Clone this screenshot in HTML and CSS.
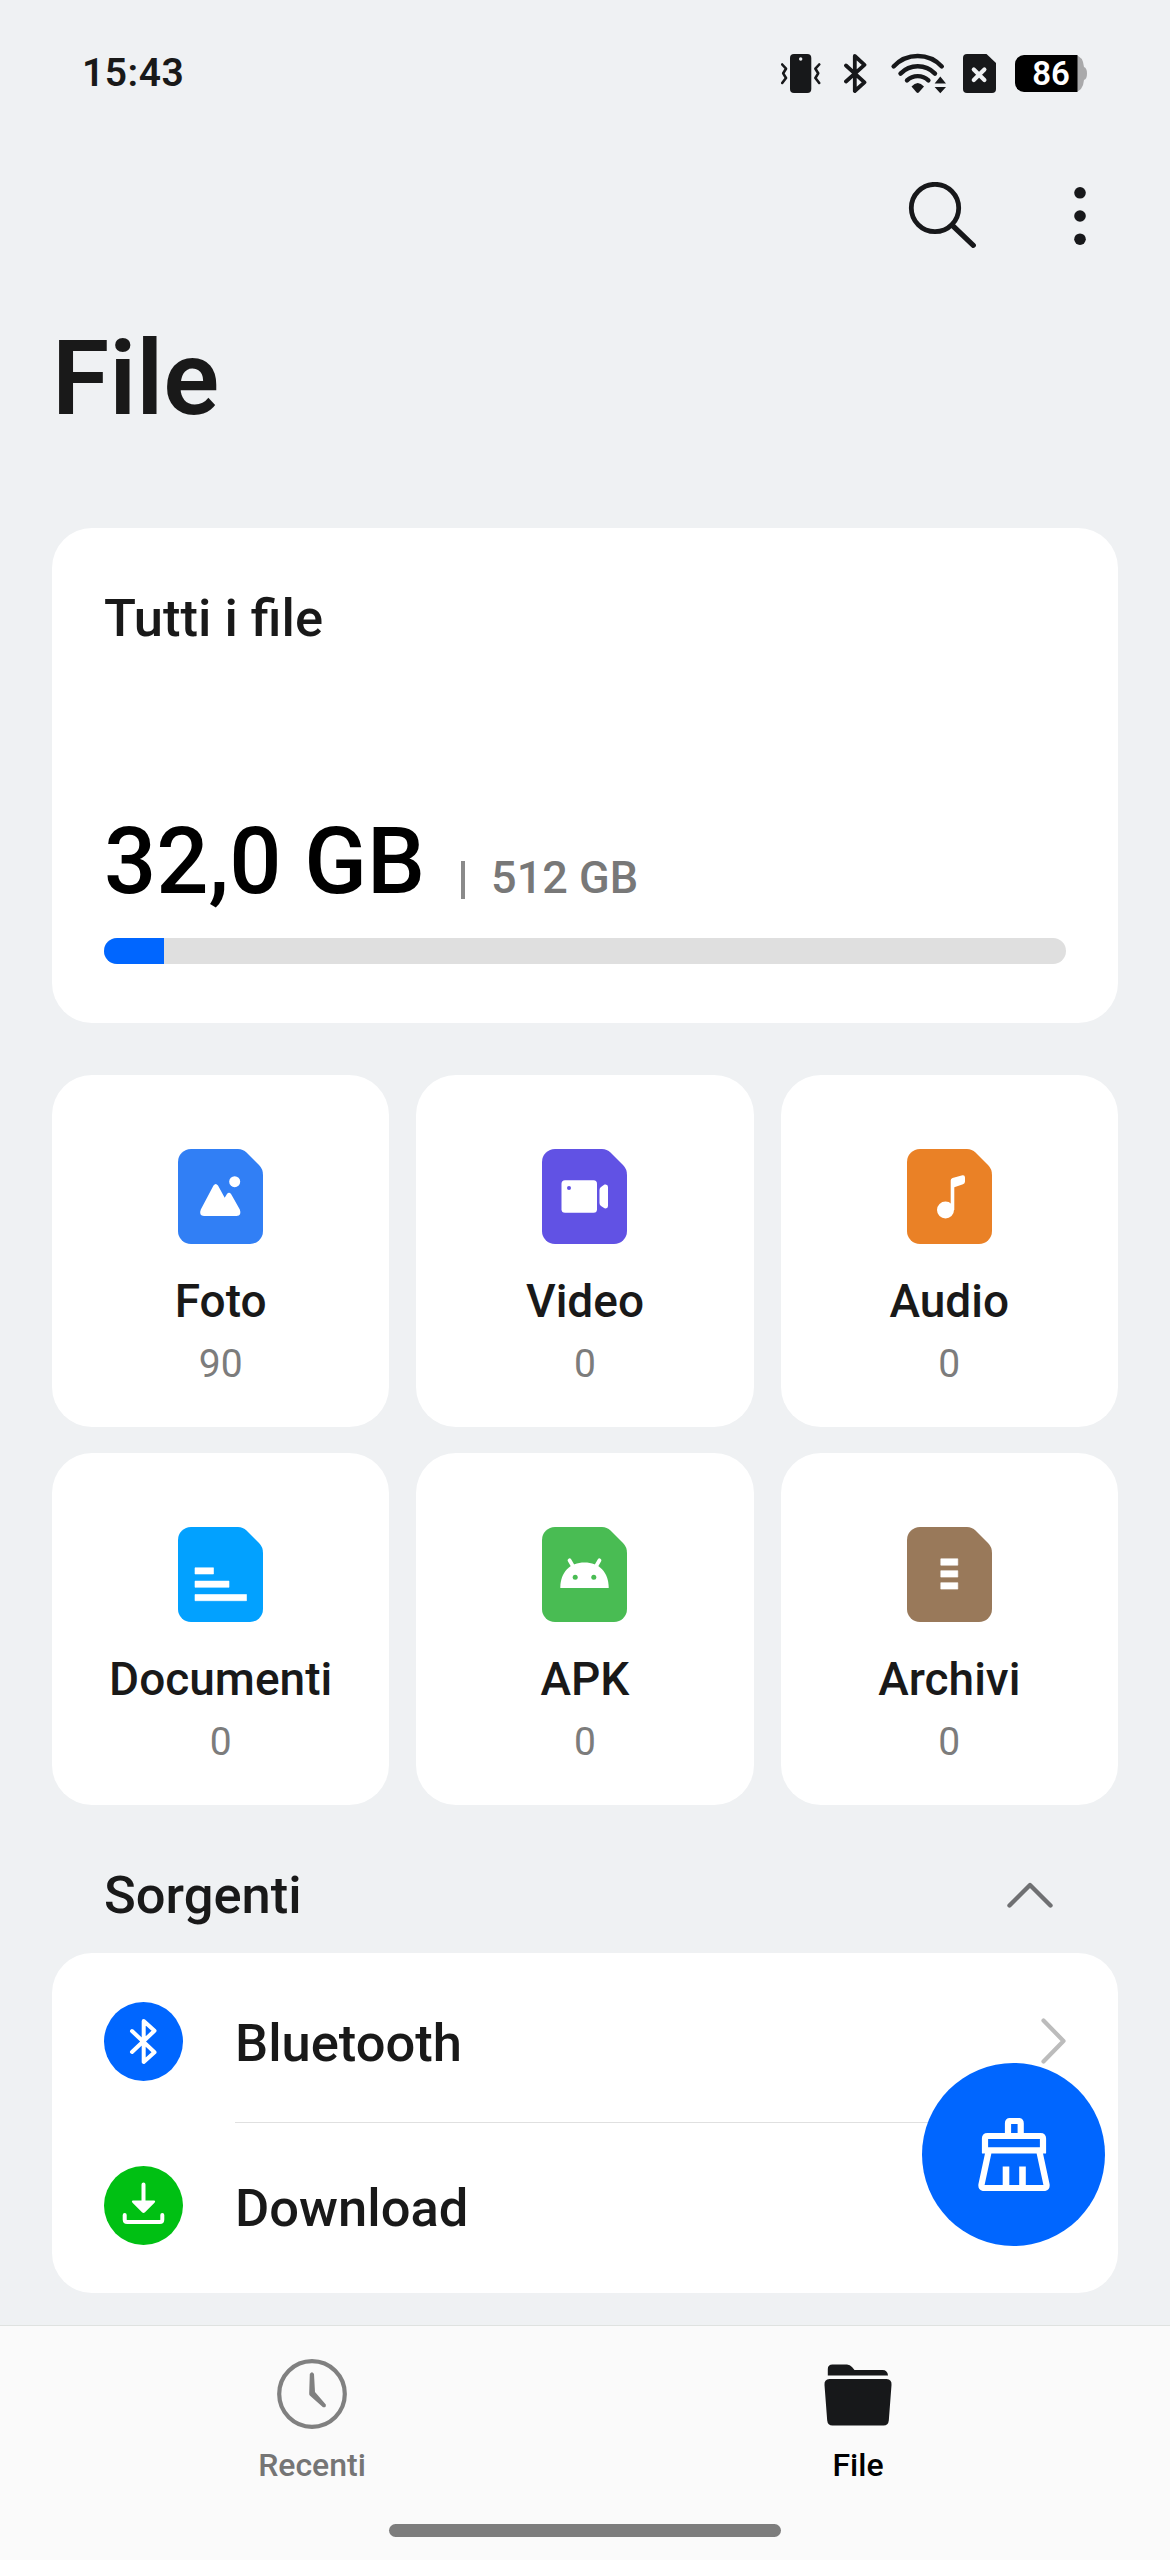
FILE: index.html
```html
<!DOCTYPE html>
<html lang="it">
<head>
    <meta charset="UTF-8">
    <meta name="viewport" content="width=device-width, initial-scale=1.0">
    <title>File</title>
    <link rel="stylesheet" href="styles.css">
</head>
<body>
    <div class="phone">
        <header class="status-bar">
            <span class="time">15:43</span>
            <div class="status-icons">
                <svg width="44" height="39" viewBox="0 0 44 39">
                    <rect x="9" width="21.3" height="39" rx="4" fill="#17181a"/>
                    <circle cx="19.7" cy="5" r="1.7" fill="#eff1f3"/>
                    <path d="M1.2 10.5L5 14.7 2.2 19.3 5 24 1.2 29M38.2 10.5L34.4 14.7 37.2 19.3 34.4 24 38.2 29" fill="none" stroke="#17181a" stroke-width="2.6" stroke-linejoin="round" stroke-linecap="round"/>
                </svg>
                <svg width="28" height="39" viewBox="0 0 28 39">
                    <path d="M2 11.5L20.5 28.3 10.8 37V2L20.5 10.8 2 27.5" fill="none" stroke="#17181a" stroke-width="3.8" stroke-linejoin="round" stroke-linecap="round"/>
                </svg>
                <svg class="wifi" width="53" height="39" viewBox="0 0 53 39">
                    <path d="M2.6 12.4A33 33 0 0 1 50.8 12.4M9.5 19.6A24 24 0 0 1 44 19.6M16 26.4A15.5 15.5 0 0 1 37.4 26.4" fill="none" stroke="#17181a" stroke-width="4.4" stroke-linecap="round"/>
                    <path d="M20.5 32.5Q26.7 25.5 33 32.5L28 38.3Q26.7 39.6 25.4 38.3Z" fill="#17181a"/>
                    <path d="M49.3 22.5L55 29.5H43.6ZM49.3 39.2L55 33H43.6Z" fill="#17181a"/>
                </svg>
                <svg width="33" height="39" viewBox="0 0 33 39">
                    <path d="M4 0H23.5L33 9V35a4 4 0 0 1-4 4H4a4 4 0 0 1-4-4V4a4 4 0 0 1 4-4Z" fill="#17181a"/>
                    <path d="M10.8 15.4L21.4 26M21.4 15.4L10.8 26" stroke="#eff1f3" stroke-width="4.2" stroke-linecap="round"/>
                </svg>
                <div class="battery">
                    <svg width="72" height="37" viewBox="0 0 72 37">
                        <path d="M60 0Q68 1 69 12 72 13 72 18.5 72 24 69 25 68 36 60 37Z" fill="#a9a9aa"/>
                        <path d="M9 0H62.5V37H9A9 9 0 0 1 0 28V9A9 9 0 0 1 9 0Z" fill="#000"/>
                    </svg>
                    <span class="battery-level">86</span>
                </div>
            </div>
        </header>

        <div class="toolbar">
            <svg width="68" height="68" viewBox="0 0 68 68">
                <circle cx="27" cy="26" r="23.7" fill="none" stroke="#17181a" stroke-width="4.8"/>
                <path d="M45 44L65.3 63.3" stroke="#17181a" stroke-width="5.2" stroke-linecap="round"/>
            </svg>
            <svg width="12" height="60" viewBox="0 0 12 60">
                <circle cx="6" cy="6.8" r="5.8" fill="#17181a"/>
                <circle cx="6" cy="30" r="5.8" fill="#17181a"/>
                <circle cx="6" cy="53.2" r="5.8" fill="#17181a"/>
            </svg>
        </div>

        <h1>File</h1>

        <main>
            <section class="card storage">
                <h2>Tutti i file</h2>
                <div class="amount">
                    <span class="used">32,0 GB</span>
                    <span class="separator"></span>
                    <span class="total">512 GB</span>
                </div>
                <div class="bar"><div class="bar-fill" style="width: 6.25%"></div></div>
            </section>

            <section class="categories">
                <div class="card category">
                    <svg width="85" height="95" viewBox="0 0 85 95">
                        <path class="photo" d="M13 0H60Q65 0 68.5 3.5L81 16Q85 20 85 26V82a13 13 0 0 1-13 13H13A13 13 0 0 1 0 82V13A13 13 0 0 1 13 0Z"/>
                        <path d="M35.5 36.5Q37.7 33.5 40 36.5L46.7 48.7 48.8 45.2Q51 42.3 53.2 45.2L61.8 60.5Q64 66.5 58.5 67H26Q20.5 66.5 22.8 60.5Z" fill="#fff"/>
                        <circle cx="56.7" cy="32.7" r="5.5" fill="#fff"/>
                    </svg>
                    <span class="name">Foto</span>
                    <span class="count">90</span>
                </div>
                <div class="card category">
                    <svg width="85" height="95" viewBox="0 0 85 95">
                        <path class="video" d="M13 0H60Q65 0 68.5 3.5L81 16Q85 20 85 26V82a13 13 0 0 1-13 13H13A13 13 0 0 1 0 82V13A13 13 0 0 1 13 0Z"/>
                        <rect x="19.5" y="31.3" width="35.5" height="32.5" rx="3.5" fill="#fff"/>
                        <circle class="video" cx="27" cy="39" r="2"/>
                        <path d="M57.5 41Q57.5 39 59 38L62.5 35.6Q66 34.8 66 38V57Q66 60 62.5 59.3L59 57Q57.5 56 57.5 54Z" fill="#fff"/>
                    </svg>
                    <span class="name">Video</span>
                    <span class="count">0</span>
                </div>
                <div class="card category">
                    <svg width="85" height="95" viewBox="0 0 85 95">
                        <path class="audio" d="M13 0H60Q65 0 68.5 3.5L81 16Q85 20 85 26V82a13 13 0 0 1-13 13H13A13 13 0 0 1 0 82V13A13 13 0 0 1 13 0Z"/>
                        <circle cx="38.5" cy="61" r="8.5" fill="#fff"/>
                        <path d="M43.7 61V31.5Q43.7 29.5 45.5 29L55.5 26.3Q58 26 58 28.5V32.5Q58 34.5 56 35.3L47.3 38.3V61Z" fill="#fff"/>
                    </svg>
                    <span class="name">Audio</span>
                    <span class="count">0</span>
                </div>
                <div class="card category">
                    <svg width="85" height="95" viewBox="0 0 85 95">
                        <path class="docs" d="M13 0H60Q65 0 68.5 3.5L81 16Q85 20 85 26V82a13 13 0 0 1-13 13H13A13 13 0 0 1 0 82V13A13 13 0 0 1 13 0Z"/>
                        <path d="M17 40.8h18.5v6.2H17ZM17 54.1h34v6.2H17ZM17 67.5h51.5v6.2H17Z" fill="#fff" stroke="#fff" stroke-width=".6" stroke-linejoin="round"/>
                    </svg>
                    <span class="name">Documenti</span>
                    <span class="count">0</span>
                </div>
                <div class="card category">
                    <svg width="85" height="95" viewBox="0 0 85 95">
                        <path class="apk" d="M13 0H60Q65 0 68.5 3.5L81 16Q85 20 85 26V82a13 13 0 0 1-13 13H13A13 13 0 0 1 0 82V13A13 13 0 0 1 13 0Z"/>
                        <path d="M18.3 61C18.3 45 28 35.5 42.500 35.5S66.7 45 66.7 61Z" fill="#fff"/>
                        <path d="M27.5 33.3L32 41M57.5 33.3L53 41" stroke="#fff" stroke-width="3.8" stroke-linecap="round"/>
                        <circle class="apk" cx="33.2" cy="50.3" r="2.5"/>
                        <circle class="apk" cx="51.8" cy="50.3" r="2.5"/>
                    </svg>
                    <span class="name">APK</span>
                    <span class="count">0</span>
                </div>
                <div class="card category">
                    <svg width="85" height="95" viewBox="0 0 85 95">
                        <path class="zip" d="M13 0H60Q65 0 68.5 3.5L81 16Q85 20 85 26V82a13 13 0 0 1-13 13H13A13 13 0 0 1 0 82V13A13 13 0 0 1 13 0Z"/>
                        <path d="M33.8 31.8h17v6.4h-17ZM33.8 43.7h17v6.4h-17ZM33.8 55.7h17v6.4h-17Z" fill="#fff" stroke="#fff" stroke-width=".6" stroke-linejoin="round"/>
                    </svg>
                    <span class="name">Archivi</span>
                    <span class="count">0</span>
                </div>
            </section>

            <div class="section-header">
                <h2>Sorgenti</h2>
                <svg width="46" height="26" viewBox="0 0 46 26">
                    <path d="M2.5 23.5L23 3 43.5 23.5" fill="none" stroke="#6f7072" stroke-width="4.4" stroke-linejoin="round" stroke-linecap="round"/>
                </svg>
            </div>

            <section class="card sources">
                <div class="source">
                    <svg width="79" height="79" viewBox="0 0 79 79">
                        <circle cx="39.5" cy="39.5" r="39.5" fill="#0066ff"/>
                        <path d="M28 29L50.5 50.3 39.7 60V19L50.5 28.7 28 50" fill="none" stroke="#fff" stroke-width="4" stroke-linejoin="round" stroke-linecap="round"/>
                    </svg>
                    <div class="source-text">
                        <span>Bluetooth</span>
                        <svg width="25" height="46" viewBox="0 0 25 46">
                            <path d="M2.5 2.5L22.5 23 2.5 43.5" fill="none" stroke="#bcbcbc" stroke-width="4.2" stroke-linejoin="round" stroke-linecap="round"/>
                        </svg>
                    </div>
                </div>
                <div class="source">
                    <svg width="79" height="79" viewBox="0 0 79 79">
                        <circle cx="39.5" cy="39.5" r="39.5" fill="#00c013"/>
                        <path d="M39.5 18.5V36M20.7 49V53.5Q20.7 56 23.2 56H55.8Q58.3 56 58.3 53.5V49" fill="none" stroke="#fff" stroke-width="4" stroke-linecap="round"/>
                        <path d="M29 34.5H50Q52 34.8 50.5 36.7L41 46.3Q39.5 47.5 38 46.3L28.5 36.7Q27 34.8 29 34.5Z" fill="#fff"/>
                    </svg>
                    <div class="source-text">
                        <span>Download</span>
                    </div>
                </div>
            </section>
        </main>

        <button class="fab">
            <svg width="72" height="73" viewBox="0 0 72 73">
                <path d="M30 17V5.5Q30 3 32.5 3H40.2Q42.7 3 42.7 5.5V17M7 35V20.5Q7 18 9.5 18H62.5Q65 18 65 20.5V35M4 32.3H68M10.5 34L3.5 66.5Q3 70 6 70H66Q69 70 68.5 66.5L61.5 34" fill="none" stroke="#fff" stroke-width="6.2"/>
                <path d="M28 48.5V70M44.5 48.5V70" stroke="#fff" stroke-width="6.6"/>
            </svg>
        </button>

        <nav class="bottom-nav">
            <div class="tabs">
                <div class="tab">
                    <svg width="70" height="70" viewBox="0 0 70 70">
                        <circle cx="35" cy="35" r="32.8" fill="none" stroke="#808080" stroke-width="4.2"/>
                        <path d="M32.8 15Q35 11.5 37 15L38 33 48.8 45.5Q49.300 49 46 48.2L32.800 36.5Q32 35.5 32.2 34Z" fill="#808080"/>
                    </svg>
                    <span>Recenti</span>
                </div>
                <div class="tab active">
                    <svg width="68" height="70" viewBox="0 0 68 70">
                        <path d="M3.8 16.5V10Q3.8 5.5 8.5 5.5H23Q26 5.5 28 8L30.5 11H58.5Q63.5 11 64 16.5Z" fill="#17181a"/>
                        <path d="M5.5 20H62.5Q68 20.5 67.5 26L64.8 61.5Q64.3 66.5 59.5 66.5H8.5Q3.7 66.5 3.2 61.5L.5 26Q0 20.5 5.5 20Z" fill="#17181a"/>
                    </svg>
                    <span>File</span>
                </div>
            </div>
            <div class="home-handle"></div>
        </nav>
    </div>
</body>
</html>
```
FILE: styles.css
```css
* {
    box-sizing: border-box;
}
body {
    margin: 0;
    background: #eff1f3;
    color: #191919;
    font-family: Roboto, sans-serif;
    font-weight: 500;
}
svg {
    display: block;
    flex-shrink: 0;
}
h1, h2 {
    margin: 0;
}
.phone {
    position: relative;
    display: flex;
    flex-direction: column;
    width: 1170px;
    height: 2560px;
    overflow: hidden;
}

.status-bar {
    display: flex;
    justify-content: space-between;
    align-items: center;
    height: 146px;
    padding: 0 83px 0 82px;
}
.time {
    font-size: 39px;
    font-weight: 600;
    letter-spacing: 0.5px;
}
.status-icons {
    display: flex;
    align-items: center;
    gap: 19px;
}
.wifi { overflow: visible; }
.battery {
    position: relative;
    width: 72px;
    height: 37px;
}
.battery-level {
    position: absolute;
    inset: 0;
    color: white;
    font-size: 33px;
    font-weight: 600;
    line-height: 38px;
    text-align: center;
}

.toolbar {
    display: flex;
    justify-content: flex-end;
    align-items: center;
    gap: 98px;
    height: 140px;
    padding-right: 84px;
}
h1 {
    height: 186px;
    padding-left: 52px;
    font-size: 104px;
    font-weight: 600;
    line-height: 186px;
}
h2 {
    font-size: 52.5px;
    font-weight: 500;
    line-height: 60px;
}

main {
    flex: 1;
    padding: 56px 52px 0;
}
.card {
    background: white;
    border-radius: 40px;
}
.storage {
    height: 495px;
    padding: 60px 52px 0;
}
.amount {
    display: flex;
    align-items: baseline;
    height: 100px;
    margin-top: 164px;
    line-height: 100px;
}
.used {
    color: black;
    font-size: 92px;
}
.separator {
    align-self: flex-end;
    width: 4px;
    height: 38px;
    margin: 0 26px 13px 36px;
    background: #8a8a8a;
}
.total {
    color: #787878;
    font-size: 45px;
    line-height: 50px;
}
.bar {
    height: 26px;
    margin-top: 26px;
    border-radius: 13px;
    background: #dfdfdf;
    overflow: hidden;
}
.bar-fill {
    height: 100%;
    background: #0066ff;
}

.categories {
    display: grid;
    grid-template-columns: repeat(3, 1fr);
    gap: 26px 27px;
    margin-top: 52px;
}
.category {
    display: flex;
    flex-direction: column;
    align-items: center;
    height: 352px;
    padding-top: 74px;
}
.name {
    margin-top: 31px;
    font-size: 46px;
    line-height: 52px;
}
.count {
    margin-top: 13px;
    color: #7c7c7c;
    font-size: 39px;
    font-weight: 400;
    line-height: 48px;
}
.photo { fill: #317ff5; }
.video { fill: #6152e4; }
.audio { fill: #ea8126; }
.docs { fill: #02a1ff; }
.apk { fill: #49bc53; }
.zip { fill: #99795a; }

.section-header {
    display: flex;
    justify-content: space-between;
    align-items: center;
    height: 148px;
    padding: 31px 65px 0 52px;
}
.sources {
    height: 340px;
    padding: 6px 52px 0;
}
.source {
    display: flex;
    align-items: center;
    gap: 52px;
    height: 164px;
}
.source-text {
    display: flex;
    flex: 1;
    justify-content: space-between;
    align-items: center;
    height: 164px;
    font-size: 52.5px;
}
.source-text span {
    padding-top: 5px;
}
.source:first-child .source-text {
    border-bottom: 1px solid #e0e0e0;
}

.fab {
    position: absolute;
    right: 65px;
    bottom: 314px;
    display: flex;
    justify-content: center;
    align-items: center;
    width: 183px;
    height: 183px;
    padding: 0;
    border: none;
    border-radius: 50%;
    background: #0066ff;
}

.bottom-nav {
    display: flex;
    flex-direction: column;
    justify-content: space-between;
    align-items: center;
    height: 235px;
    padding-bottom: 23px;
    border-top: 1px solid #dfe2e0;
    background: #fafafa;
}
.tabs {
    display: flex;
    width: 1092px;
    padding-top: 33px;
}
.tab {
    display: flex;
    flex: 1;
    flex-direction: column;
    align-items: center;
    gap: 16px;
    color: #757575;
    font-size: 32px;
    line-height: 40px;
}
.tab.active {
    color: black;
}
.home-handle {
    width: 392px;
    height: 13px;
    border-radius: 7px;
    background: #7d7d7d;
}
```
